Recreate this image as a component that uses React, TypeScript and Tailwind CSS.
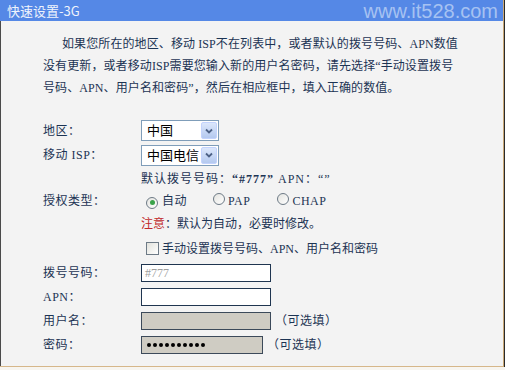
import React from "react";

const FONT = { fontFamily: '"Liberation Serif", "Noto Sans CJK SC", serif' };

function Select({ text, w }: { text: string; w: number }) {
  return (
    <div
      className="flex items-center h-[21px] border border-[#7f9db9] bg-white"
      style={{ width: w }}
    >
      <span className="flex-1 pl-[5px] text-[13px] text-black leading-none whitespace-nowrap overflow-hidden">{text}</span>
      <span className="w-[16px] h-[17px] mr-[1px] shrink-0 flex items-center justify-center rounded-[2px] bg-gradient-to-b from-[#dce7fb] to-[#b4c9ef] border border-[#c3d3fd]">
        <svg width="8" height="6" viewBox="0 0 8 6">
          <path d="M1 1.5 L4 4.5 L7 1.5" stroke="#4d6185" strokeWidth="1.8" fill="none" />
        </svg>
      </span>
    </div>
  );
}

function Radio({ checked }: { checked?: boolean }) {
  return (
    <span className="inline-flex items-center justify-center w-[12px] h-[12px] rounded-full border border-[#6d7a86] bg-gradient-to-br from-[#e4e4e0] to-white">
      {checked && <span className="w-[5px] h-[5px] rounded-full bg-[#3aa34a]" />}
    </span>
  );
}

function Row({ h, label, children }: { h: string; label?: string; children?: React.ReactNode }) {
  return (
    <div className={`flex items-center ${h}`}>
      <div className="w-[140px] pl-[42px] shrink-0 text-[12px] text-[#1c3454] whitespace-nowrap tracking-[0.5px]">{label}</div>
      <div className="flex items-center">{children}</div>
    </div>
  );
}

const DOTS = [0, 1, 2, 3, 4, 5, 6, 7, 8, 9];

export default function App() {
  return (
    <div className="w-[505px] h-[370px] overflow-hidden bg-[#f7f5f0] flex" style={FONT}>
      <div className="w-[504px] h-[367px] flex flex-col bg-[#f3f3f3] border-r border-r-[#c9a877] border-b border-b-[#d6b78a]">
        <div className="h-[21px] bg-[#5588e6] flex items-center justify-between pl-[7px] pr-[5px]">
          <span className="text-[13px] text-[#eef3fc] leading-none" style={{ fontFamily: '"Noto Sans CJK SC", sans-serif' }}>快速设置-3G</span>
          <span className="text-[20px] text-[#a6c2f2] leading-none" style={{ fontFamily: '"Liberation Sans", sans-serif' }}>www.it528.com</span>
        </div>
        <div className="flex-1 border-l border-[#4a4a4a]">
          <div className="pt-[12px] pl-[42px] text-[12px] leading-[22px] text-[#1c3454] tracking-[0.1px]">
            <div className="whitespace-nowrap pl-[19px]">如果您所在的地区、移动 ISP不在列表中，或者默认的拨号号码、APN数值</div>
            <div className="whitespace-nowrap">没有更新，或者移动ISP需要您输入新的用户名密码，请先选择“手动设置拨号</div>
            <div className="whitespace-nowrap">号码、APN、用户名和密码”，然后在相应框中，填入正确的数值。</div>
          </div>
          <div className="mt-[19px]">
            <Row h="h-[25px]" label="地区：">
              <Select text="中国" w={78} />
            </Row>
            <Row h="h-[24px]" label="移动 ISP：">
              <Select text="中国电信" w={78} />
            </Row>
            <Row h="h-[23px]">
              <span className="text-[12px] text-[#1c3454] whitespace-nowrap tracking-[1px]">
                默认拨号号码：<b>“#777”</b> APN：“”
              </span>
            </Row>
            <Row h="h-[22px]" label="授权类型：">
              <div className="flex items-center text-[12px] text-[#1c3454] tracking-[0.5px]">
                <span className="ml-[5px]"><Radio checked /></span>
                <span className="ml-[4px]">自动</span>
                <span className="ml-[26px]"><Radio /></span>
                <span className="ml-[3px]">PAP</span>
                <span className="ml-[27px]"><Radio /></span>
                <span className="ml-[3px]">CHAP</span>
              </div>
            </Row>
            <Row h="h-[24px]">
              <span className="text-[12px] text-[#1c3454] whitespace-nowrap">
                <span className="text-[#c0282a]">注意</span>：默认为自动，必要时修改。
              </span>
            </Row>
            <Row h="h-[25px]">
              <div className="flex items-center text-[12px] text-[#1c3454] whitespace-nowrap">
                <span className="ml-[5px] w-[13px] h-[13px] border border-[#6d7a86] bg-gradient-to-br from-[#e2e2dc] to-white" />
                <span className="ml-[3px]">手动设置拨号号码、APN、用户名和密码</span>
              </div>
            </Row>
            <Row h="h-[24px]" label="拨号号码：">
              <div className="w-[130px] h-[18px] border border-[#1f3550] bg-white text-[12px] text-[#a0a0a0] pl-[3px] leading-[16px]">#777</div>
            </Row>
            <Row h="h-[24px]" label="APN：">
              <div className="w-[130px] h-[18px] border border-[#1f3550] bg-white" />
            </Row>
            <Row h="h-[24px]" label="用户名：">
              <div className="w-[130px] h-[18px] border border-[#3c4a5a] bg-[#cfccc3]" />
              <span className="ml-[4px] text-[12px] text-[#1c3454] whitespace-nowrap tracking-[0.5px]">（可选填）</span>
            </Row>
            <Row h="h-[24px]" label="密码：">
              <div className="w-[122px] h-[18px] border border-[#3c4a5a] bg-[#cfccc3] flex items-center gap-[2px] pl-[5px]">
                {DOTS.map((d) => (
                  <span key={d} className="w-[4px] h-[4px] rounded-full bg-black" />
                ))}
              </div>
              <span className="ml-[4px] text-[12px] text-[#1c3454] whitespace-nowrap tracking-[0.5px]">（可选填）</span>
            </Row>
          </div>
        </div>
      </div>
      <div className="w-[1px] h-[367px] bg-[#2a2a2a]" />
    </div>
  );
}
